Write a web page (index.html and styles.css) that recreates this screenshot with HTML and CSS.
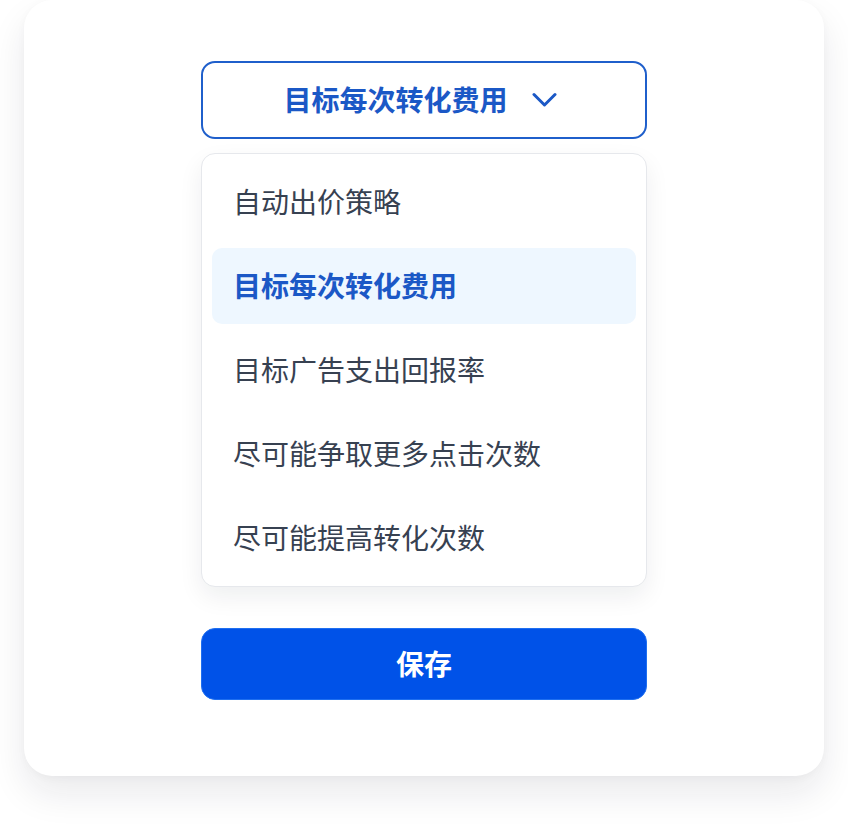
FILE: index.html
```html
<!DOCTYPE html>
<html lang="zh-CN">
<head>
    <meta charset="UTF-8">
    <meta name="viewport" content="width=device-width, initial-scale=1.0">
    <title>出价策略</title>
    <link rel="stylesheet" href="styles.css">
</head>
<body>
    <main class="card">
        <div class="panel">
            <button type="button" class="select">
                <span class="select-value">目标每次转化费用</span>
                <svg class="chevron" width="25" height="16" viewBox="0 0 25 16" aria-hidden="true">
                    <polyline points="2,2.5 12.5,13 23,2.5" fill="none" stroke="currentColor" stroke-width="3" stroke-linecap="round" stroke-linejoin="round"/>
                </svg>
            </button>

            <ul class="options">
                <li class="option">自动出价策略</li>
                <li class="option active">目标每次转化费用</li>
                <li class="option">目标广告支出回报率</li>
                <li class="option">尽可能争取更多点击次数</li>
                <li class="option">尽可能提高转化次数</li>
            </ul>

            <button type="button" class="btn-save">保存</button>
        </div>
    </main>
</body>
</html>
```

FILE: styles.css
```css
* {
    margin: 0;
    padding: 0;
    box-sizing: border-box;
    font-family: 'Noto Sans CJK SC', 'Noto Sans', sans-serif;
}

body {
    background-color: #ffffff;
    padding: 0 24px 48px;
}

.card {
    background-color: #ffffff;
    border-radius: 28px;
    height: 776px;
    padding-top: 61px;
    box-shadow: 0 18px 36px rgba(17, 24, 39, 0.09), 0 2px 8px rgba(17, 24, 39, 0.03);
}

.panel {
    width: 446px;
    margin: 0 auto;
    display: flex;
    flex-direction: column;
}

.select {
    height: 78px;
    border: 2px solid #1f5fcb;
    border-radius: 14px;
    background-color: #ffffff;
    color: #1b58c6;
    display: flex;
    align-items: center;
    justify-content: center;
    gap: 24px;
    padding: 0 8px 2px 0;
    cursor: pointer;
}

.select-value {
    font-size: 28px;
    font-weight: 700;
    line-height: 1;
}

.chevron {
    display: block;
    margin-top: 2px;
}

.options {
    list-style: none;
    margin-top: 14px;
    padding: 10px;
    border: 1px solid #e6e8ec;
    border-radius: 14px;
    background-color: #ffffff;
    box-shadow: 0 10px 24px rgba(17, 24, 39, 0.07);
    display: flex;
    flex-direction: column;
    gap: 8px;
}

.option {
    height: 76px;
    display: flex;
    align-items: center;
    padding: 0 0 3px 21px;
    border-radius: 10px;
    font-size: 28px;
    color: #374151;
}

.option.active {
    background-color: #eef7ff;
    color: #1b58c6;
    font-weight: 700;
}

.btn-save {
    margin-top: 41px;
    height: 72px;
    border: 1px solid #1f6ff0;
    border-radius: 14px;
    background-color: #0052e8;
    color: #ffffff;
    font-size: 28px;
    font-weight: 700;
    padding-bottom: 2px;
    cursor: pointer;
}
```
